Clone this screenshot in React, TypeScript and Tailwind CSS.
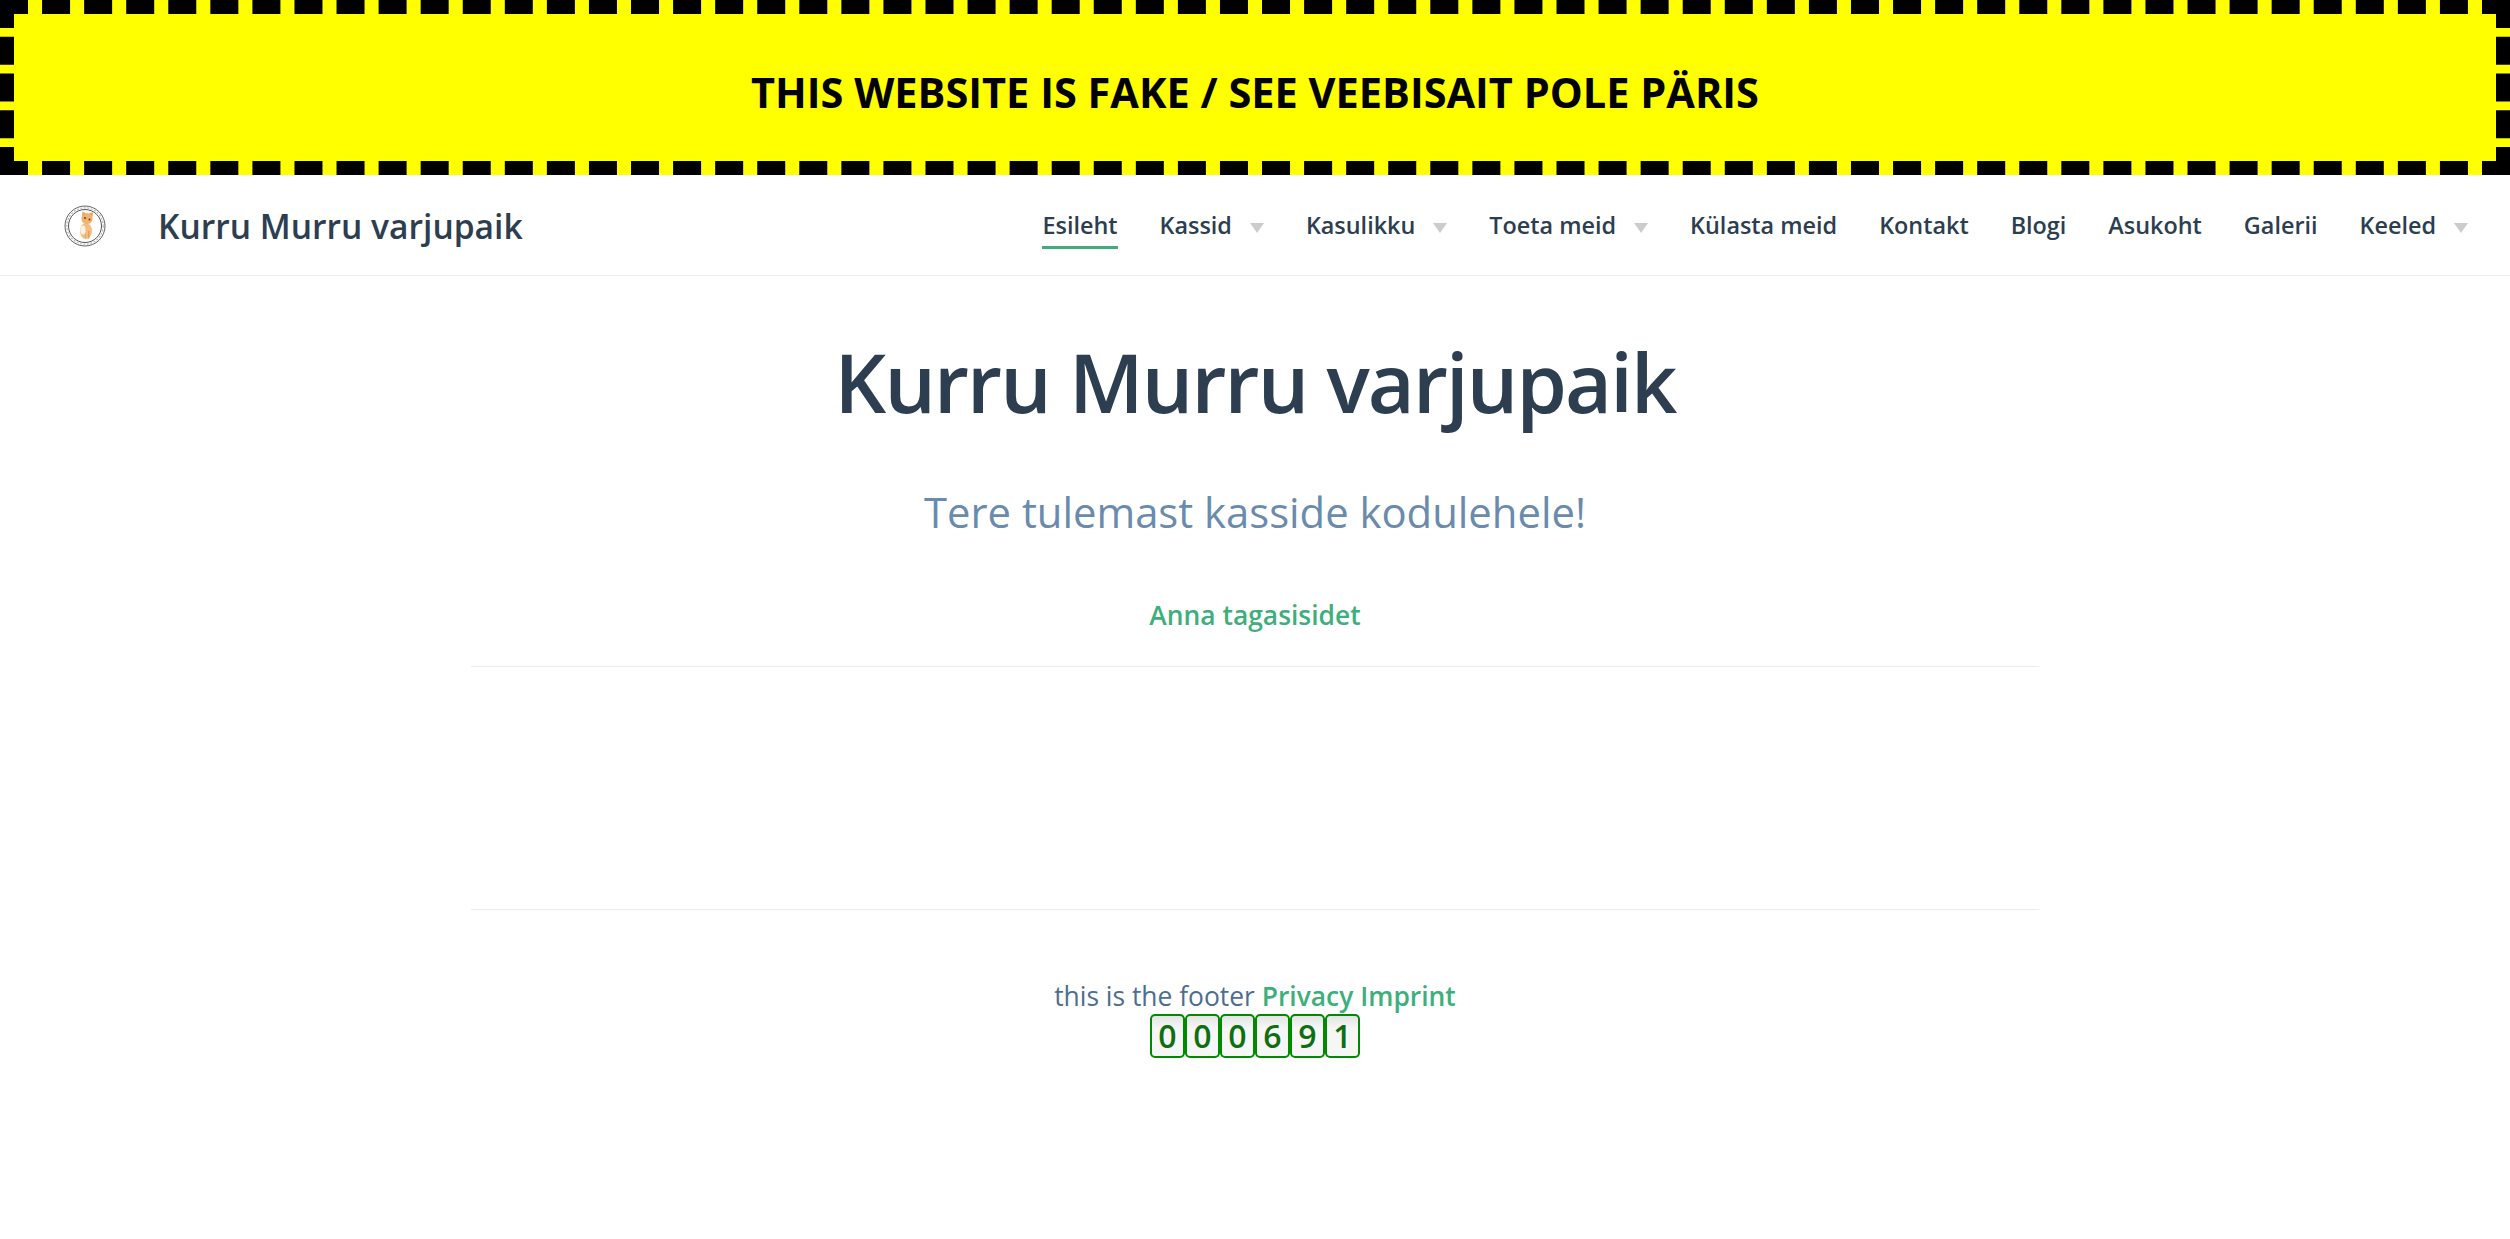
const items: [string, boolean][] = [
  ["Esileht", false],
  ["Kassid", true],
  ["Kasulikku", true],
  ["Toeta meid", true],
  ["Külasta meid", false],
  ["Kontakt", false],
  ["Blogi", false],
  ["Asukoht", false],
  ["Galerii", false],
  ["Keeled", true],
];

function Logo() {
  return (
    <svg width="42" height="42" viewBox="0 0 42 42">
      <circle cx="21" cy="21" r="20" fill="#fff" stroke="#666" strokeWidth="1" />
      <circle cx="21" cy="21" r="16.5" fill="#fff" stroke="#555" strokeWidth="1" />
      <circle cx="21" cy="21" r="18.2" fill="none" stroke="#b5b5b5" strokeWidth="1.2" strokeDasharray="2 1.5" />
      <ellipse cx="22" cy="26" rx="6" ry="8" fill="#f3bd82" />
      <ellipse cx="19" cy="25" rx="2.6" ry="4.5" fill="#fbf1e4" />
      <rect x="24" y="26" width="1.3" height="7.5" fill="#e4a05a" />
      <rect x="21" y="29" width="1" height="4.5" fill="#e6a968" />
      <circle cx="23" cy="13.5" r="5.6" fill="#f0b26c" />
      <path d="M18 11 L18.5 6.5 L22 8.5 Z M25 8 L29 7.5 L28.5 12 Z" fill="#e9a55c" />
      <circle cx="21" cy="13" r="0.9" fill="#5a3a20" />
      <circle cx="25.5" cy="14.5" r="0.9" fill="#5a3a20" />
    </svg>
  );
}

export default function App() {
  return (
    <div className="min-h-[1239px] bg-white font-['Open_Sans','Noto_Sans',sans-serif] text-[#2c3e50]">
      <div className="flex h-[175px] items-center justify-center border-[14px] border-dashed border-black bg-[#ffff00] pt-[10px] text-[41.5px] font-bold text-black">
        THIS WEBSITE IS FAKE / SEE VEEBISAIT POLE PÄRIS
      </div>
      <header className="flex h-[101px] items-center justify-between border-b border-[#eaecef] pl-[64px] pr-[42px] pt-[3px]">
        <div className="flex items-center gap-[52px]">
          <Logo />
          <span className="text-[33.6px] font-semibold">Kurru Murru varjupaik</span>
        </div>
        <nav className="flex items-center gap-[42px] pt-[4px]">
          {items.map(([t, caret], i) => (
            <span key={t} className="flex items-center text-[23.4px] font-[550]">
              <span className={i === 0 ? "border-b-[3px] border-[#3eaf7c] pb-[2px]" : "border-b-[3px] border-transparent pb-[2px]"}>{t}</span>
              {caret && <span className="ml-[18px] h-0 w-0 border-x-[7px] border-t-[10px] border-x-transparent border-t-[#cccccc]" />}
            </span>
          ))}
        </nav>
      </header>
      <main className="mx-auto w-[1568px] text-center">
        <h1 className="pt-[45px] text-[81px] font-semibold tracking-[-1.85px]">Kurru Murru varjupaik</h1>
        <p className="mt-[38px] text-[41.8px] text-[#6a8bad]">Tere tulemast kasside kodulehele!</p>
        <p className="mt-[53px] border-b border-[#eaecef] pb-[30px] text-[26.4px] font-semibold text-[#3eaf7c]">Anna tagasisidet</p>
        <div className="h-[243px] border-b border-[#eaecef]" />
        <p className="mt-[69px] text-[26.4px] leading-[35px] text-[#4e6e8e]">
          this is the footer <span className="font-semibold text-[#3eaf7c]">Privacy Imprint</span>
        </p>
        <div className="flex justify-center">
          {"000691".split("").map((d, i) => (
            <span key={i} className="flex h-[44px] w-[35px] items-center justify-center rounded-[5px] border-2 border-[#008a00] bg-gradient-to-b from-[#e4e4e4] to-[#f6f6f6] to-30% text-[32px] font-semibold text-[#0f6f0f]">{d}</span>
          ))}
        </div>
      </main>
    </div>
  );
}
